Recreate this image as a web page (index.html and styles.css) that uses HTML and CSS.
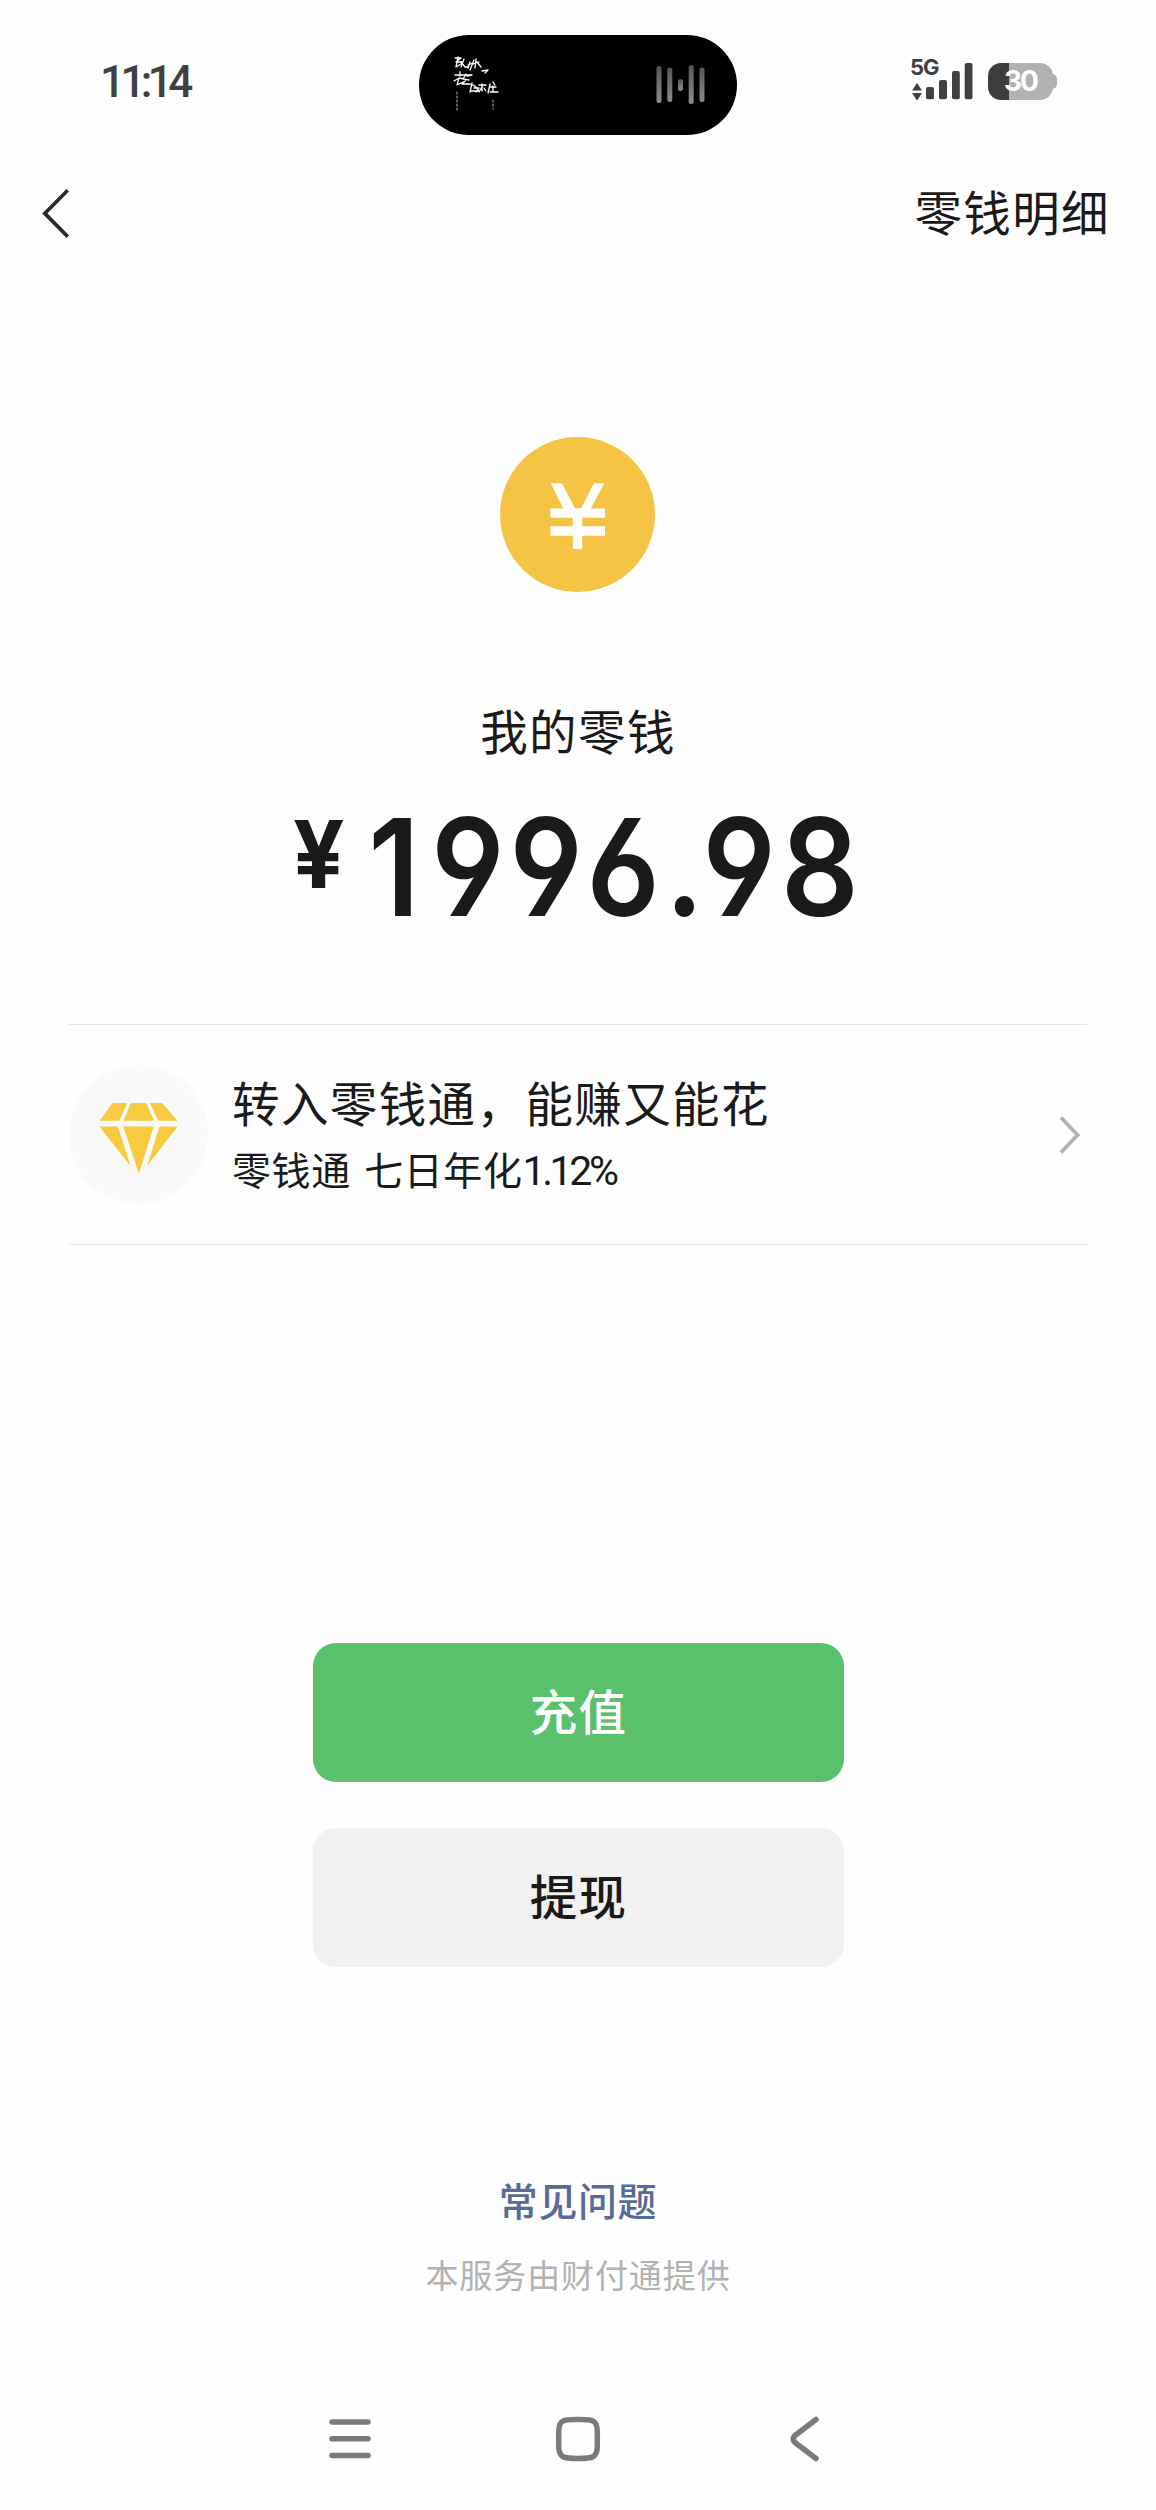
FILE: index.html
```html
<!DOCTYPE html>
<html lang="zh-CN">
<head>
<meta charset="utf-8">
<title>零钱</title>
<link rel="stylesheet" href="styles.css">
</head>
<body>
<div class="screen">
  <header class="status">
    <span class="time">11:14</span>
    <div class="island">
      <svg class="cover" width="48" height="58" viewBox="452 54 48 58" fill="none" stroke="#fff" stroke-linecap="round" stroke-linejoin="round">
        <path stroke-width="1.3" d="M455 58h6l-5 4h6M458 57l-2 10 5-3M464 59l-3 8M461 62l4 5h3M470 62l-2 6M468 65l5-2M474 60l-4 10M476 59l-1 9M473 64l6-2M477 62l4 5M482 71l6-1-3 3M455 75h16M460 72v4M454 81l5-3 5 1M459 78l-2 7 6-3M466 74l-3 5 6 1M467 76l5-1M466 80l-4 4M462 84h8l5 2M472 83l-2 9M474 88h5l-3 4M471 91h8M473 85l3 2M479 85h7M483 85l-4 7M482 84v7M484 88l2 3M490 84l-2 9M493 82l2 3M490 87h6M493 86v6M490 92h8"/>
        <path stroke="#999" stroke-width="1.2" stroke-dasharray="2 2" d="M457 92v18M493 100v9"/>
      </svg>
      <svg class="wave" width="50" height="40" viewBox="656 64 50 40">
        <defs><linearGradient id="bar" x1="0" y1="0" x2="0" y2="1"><stop offset="0" stop-color="#555"/><stop offset="1" stop-color="#8c8c8c"/></linearGradient></defs>
        <g fill="url(#bar)"><rect x="656.5" y="66" width="5" height="37" rx="2.5"/><rect x="667.3" y="67.5" width="5" height="34.5" rx="2.5"/><rect x="678" y="79" width="5" height="12" rx="2.5"/><rect x="688.7" y="65" width="5" height="39" rx="2.5"/><rect x="699.5" y="67.5" width="5" height="34.5" rx="2.5"/></g>
      </svg>
    </div>
    <div class="indicators">
      <div class="network">
        <span class="net">5G</span>
        <svg width="62" height="38" viewBox="911 63 62 38" fill="#404040"><path d="M917 83l5 7.5h-10zM917 100.500l5-7.500h-10z"/><rect x="926" y="87" width="8" height="12.2" rx="2"/><rect x="939" y="80" width="8" height="19.2" rx="2"/><rect x="952" y="71" width="7.800" height="28.2" rx="2"/><rect x="964.7" y="63" width="7.800" height="36.2" rx="2"/></svg>
      </div>
      <div class="battery"><span>30</span></div>
    </div>
  </header>

  <nav class="topbar">
    <svg width="28" height="52" viewBox="41 187 28 52" fill="none" stroke="#2b2b2b" stroke-width="3.7"><path d="M67.800 190.200L44.800 213.400 67.800 236.600"/></svg>
    <span class="link">零钱明细</span>
  </nav>

  <main class="balance">
    <svg class="coin" width="155" height="155" viewBox="0 0 155 155"><circle cx="77.5" cy="77.5" r="77.5" fill="#f6c445"/><path fill="#fff" d="M50.700 46.300H62L75 71.500h6L94 46.300h10.300L90 73H64z"/><path d="M50.500 76.200h54.500M50.500 94h54.500M77.500 78v34" stroke="#fff" stroke-width="9.300" fill="none"/></svg>
    <div class="label">我的零钱</div>
    <div class="amount"><span class="sign">¥</span><span class="num"><span class="lead">1</span>996.98</span></div>
  </main>

  <section class="promo">
    <div class="gem"><svg width="79" height="72" viewBox="148 278 234 212" fill="#f6cb40"><path d="M188 280h43l-22 53h-59zM242 280h46l23 53h-90zM299 280h36l46 53h-57zM149 350h55l38 118zM220 350h90l-44 140zM327 350h54l-90 116z"/></svg></div>
    <div class="copy">
      <div class="headline">转入零钱通，能赚又能花</div>
      <div class="sub">零钱通 七日年化<span class="rate">1.12%</span></div>
    </div>
    <svg class="chev" width="22" height="40" viewBox="0 0 22 40" fill="none" stroke="#b2b2b2" stroke-width="3.8"><path d="M2 2.500L18.500 20 2 37.500"/></svg>
  </section>

  <section class="actions">
    <button class="btn primary">充值</button>
    <button class="btn">提现</button>
  </section>

  <footer class="foot">
    <div class="faq">常见问题</div>
    <div class="provider">本服务由财付通提供</div>
  </footer>

  <nav class="sysnav">
    <svg width="44" height="46" viewBox="0 0 44 46"><path d="M4 6h36M4 22.700h36M4 39.400h36"/></svg>
    <svg width="46" height="46" viewBox="0 0 46 46"><path d="M23 3.500C37 3.500 42.300 3 42.300 16v14c0 12-5 12.500-19.300 12.500S3.700 42 3.700 30V16C3.700 3 9 3.500 23 3.500z"/></svg>
    <svg width="32" height="46" viewBox="0 0 32 46"><path d="M27 3.500L6 19.500Q2.500 23 6 26.500L27 42.500"/></svg>
  </nav>
</div>
</body>
</html>
```
FILE: styles.css
```css
* { box-sizing: border-box; }
body { margin: 0; background: #fefefe; }
svg { display: block; flex: none; }
.screen { width: 1156px; height: 2510px; overflow: hidden; display: flex; flex-direction: column; background: #fefefe; color: #1a1a1a; font-family: "Noto Sans CJK SC", sans-serif; }

.status { height: 140px; flex: none; display: grid; grid-template-columns: 419px 318px 1fr; padding-top: 35px; }
.time { padding-left: 100px; font: 500 44px/95px Roboto, sans-serif; letter-spacing: -4.6px; color: #404040; }
.island { height: 100px; border-radius: 50px; background: #000; display: flex; justify-content: space-between; padding: 19px 31px 0 33px; }
.wave { margin-top: 10px; }
.indicators { display: flex; padding: 21px 0 0 174px; gap: 15px; }
.network { display: grid; width: 62px; height: 45px; }
.network > * { grid-area: 1 / 1; }
.network svg { margin-top: 7px; }
.net { font: 700 22px/22px Inter, sans-serif; letter-spacing: -1px; color: #404040; margin-left: -1px; }
.battery { width: 65px; height: 37px; margin-top: 7px; border-radius: 13px; background: linear-gradient(90deg, #3c3c3c 21px, #b2b2b2 21px); display: flex; align-items: center; position: relative; }
.battery span { padding-left: 16px; font: 700 28px/37px Inter, sans-serif; letter-spacing: -2px; color: #fff; }
.battery::after { content: ""; position: absolute; right: -4px; top: 11px; width: 6px; height: 15px; border-radius: 0 5px 5px 0; background: #b2b2b2; }

.topbar { height: 146px; flex: none; display: flex; align-items: center; justify-content: space-between; padding: 0 46px 0 41px; }
.link, .label, .headline { font-size: 47.5px; line-height: 70px; letter-spacing: 1.4px; }
.link { margin-bottom: 4px; }

.balance { height: 738px; flex: none; display: flex; flex-direction: column; align-items: center; padding-top: 151px; }
.coin { margin-right: 1px; }
.label { margin-top: 103px; }
.amount { display: flex; width: 570px; height: 130px; margin-top: 37px; }
.sign { flex: none; width: 77px; font: 700 94px/104px Inter, sans-serif; transform: scaleX(.96); transform-origin: 0 0; }
.num { flex: none; font: 600 135px/130px Inter, sans-serif; font-feature-settings: "cv03", "cv04"; letter-spacing: 5.6px; transform: scaleX(.9); transform-origin: 0 0; white-space: nowrap; }
.lead { display: inline-block; width: 70px; margin-left: -2px; }

.promo { width: 1018px; height: 221px; flex: none; margin: 0 69px; display: flex; align-items: center; border: solid #e6e6e6; border-width: 1px 0; padding-right: 6px; }
.gem { width: 139px; height: 139px; border-radius: 50%; background: #f9f9f9; display: grid; place-items: center; padding-top: 7px; }
.copy { flex: 1; padding: 2px 0 0 24px; }
.headline { line-height: 68px; }
.sub { font-size: 39px; line-height: 64px; letter-spacing: .6px; word-spacing: 4px; }
.rate { font-family: Roboto, sans-serif; font-size: 41px; letter-spacing: -3.4px; }

.actions { margin-top: 398px; display: flex; flex-direction: column; align-items: center; gap: 46px; }
.btn { width: 531px; height: 139px; border: 0; border-radius: 23px; background: #f1f1f1; color: #1a1a1a; font: 500 47.5px/70px "Noto Sans CJK SC", sans-serif; letter-spacing: 1.3px; padding: 0 0 5px 1px; }
.primary { background: #5bc06c; color: #fff; }

.foot { margin-top: 203px; display: flex; flex-direction: column; align-items: center; }
.faq { font-size: 39px; font-weight: 500; line-height: 58px; letter-spacing: .6px; color: #576b95; }
.provider { margin-top: 22px; font-size: 33px; line-height: 48px; letter-spacing: .9px; color: #b2b2b2; }

.sysnav { margin-top: 118px; display: grid; grid-template-columns: 227px 234px 32px; padding-left: 328px; }
.sysnav path { fill: none; stroke: #7b7b7b; stroke-width: 5.5px; stroke-linecap: round; stroke-linejoin: round; }
```
